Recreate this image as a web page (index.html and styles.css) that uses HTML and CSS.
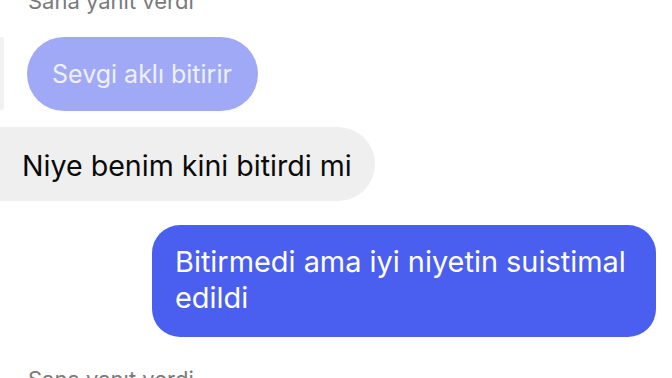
FILE: index.html
```html
<!DOCTYPE html>
<html lang="tr">
<head>
<meta charset="utf-8">
<link rel="stylesheet" href="styles.css">
</head>
<body>
<div class="thread">
  <div class="meta meta-top">Sana yanıt verdi</div>
  <div class="reply-row">
    <div class="reply-bar"></div>
    <div class="bubble quoted">Sevgi aklı bitirir</div>
  </div>
  <div class="bubble received">Niye benim kini bitirdi mi</div>
  <div class="bubble sent">Bitirmedi ama iyi niyetin suistimal edildi</div>
  <div class="meta meta-bottom">Sana yanıt verdi</div>
</div>
</body>
</html>
```
FILE: styles.css
```css
html, body {
  margin: 0;
  padding: 0;
  background: #ffffff;
  overflow: hidden;
}
body {
  font-family: "Inter", "Noto Sans", sans-serif;
}
.thread {
  display: flex;
  flex-direction: column;
  width: 672px;
}
.meta {
  font-size: 22px;
  line-height: 26px;
  color: #7a7a7a;
  padding-left: 28px;
}
.meta-top {
  margin-top: -12px;
}
.meta-bottom {
  margin-top: 29px;
}
.reply-row {
  display: flex;
  align-items: stretch;
  margin-top: 23px;
}
.reply-bar {
  width: 4px;
  height: 73px;
  background: #f1f1f1;
  border-radius: 0 3px 3px 0;
}
.bubble {
  box-sizing: border-box;
}
.quoted {
  margin-left: 23px;
  height: 74px;
  display: flex;
  align-items: center;
  padding: 0 26px 0 25px;
  border-radius: 37px;
  background: #a0a9f5;
  color: #eef0fd;
  font-size: 25px;
}
.received {
  align-self: flex-start;
  margin-top: 16px;
  height: 74px;
  display: flex;
  align-items: center;
  padding: 2px 23px 0 22px;
  border-radius: 0 37px 37px 0;
  background: #efefef;
  color: #0a0a0a;
  font-size: 28.6px;
}
.sent {
  align-self: flex-end;
  width: 504px;
  margin-top: 24px;
  margin-right: 16px;
  padding: 19px 23px 21px 23px;
  border-radius: 28px;
  background: #4a5ef0;
  color: #ffffff;
  font-size: 28.9px;
  line-height: 36px;
}
```
